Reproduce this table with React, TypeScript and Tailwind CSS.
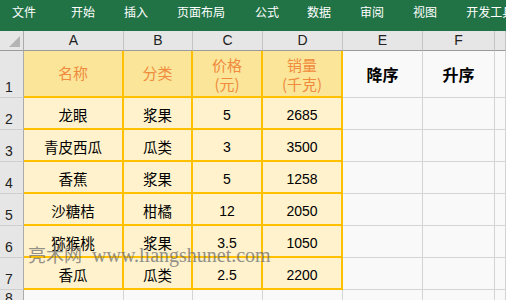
import React from "react";

const cjk = '"Noto Sans CJK SC", "Noto Sans", sans-serif';
const latin = '"Liberation Sans", "Noto Sans CJK SC", sans-serif';

const rows: [string, string, string, string][] = [
  ["龙眼", "浆果", "5", "2685"],
  ["青皮西瓜", "瓜类", "3", "3500"],
  ["香蕉", "浆果", "5", "1258"],
  ["沙糖桔", "柑橘", "12", "2050"],
  ["猕猴桃", "浆果", "3.5", "1050"],
  ["香瓜", "瓜类", "2.5", "2200"],
];

const menu = [
  { t: "文件", ml: "ml-[12px]" },
  { t: "开始", ml: "ml-[35px]" },
  { t: "插入", ml: "ml-[29px]" },
  { t: "页面布局", ml: "ml-[29px]" },
  { t: "公式", ml: "ml-[30px]" },
  { t: "数据", ml: "ml-[28px]" },
  { t: "审阅", ml: "ml-[29px]" },
  { t: "视图", ml: "ml-[29px]" },
  { t: "开发工具", ml: "ml-[29px]" },
];

const letters = ["A", "B", "C", "D", "E", "F", ""];

export default function App() {
  const rowHead =
    "bg-[#e6e6e6] border-r border-r-[#ababab] border-b border-b-[#cfcfcf] flex items-end pl-[5px] pb-[2px] text-[14px] leading-[16px] text-[#222]";
  const yellow =
    "bg-[#fff2cc] border-r-2 border-b-2 border-[#ffc000] flex items-center justify-center pt-[4px] text-[14.5px] leading-[18px] text-black";
  const gray = "bg-[#f9f9f9] border-r border-b border-[#d4d4d4]";
  return (
    <div className="relative w-[506px] h-[300px] overflow-hidden bg-[#f9f9f9]" style={{ fontFamily: cjk }}>
      {/* ribbon */}
      <div className="h-[31px] bg-[#217346] flex items-start pt-[4px] whitespace-nowrap">
        {menu.map((m) => (
          <span key={m.t} className={`${m.ml} text-white text-[12px] leading-[16px] shrink-0`}>
            {m.t}
          </span>
        ))}
      </div>
      {/* grid */}
      <div className="grid grid-cols-[24px_100px_69px_70px_80px_80px_72px_1fr] grid-rows-[20px_47px_32px_32px_32px_32px_32px_32px_1fr] h-[269px]">
        {/* header row */}
        <div className="bg-[#e6e6e6] border-r border-r-[#ababab] border-b border-b-[#9b9b9b] relative">
          <div className="absolute right-[3px] bottom-[3px] w-0 h-0 border-l-[11px] border-l-transparent border-b-[11px] border-b-[#b4b4b4]" />
        </div>
        {letters.map((l, i) => (
          <div
            key={i}
            className="bg-[#e6e6e6] border-r border-r-[#c4c4c4] border-b border-b-[#9b9b9b] flex items-center justify-center text-[14px] text-[#222]"
            style={{ fontFamily: latin }}
          >
            {l}
          </div>
        ))}

        {/* row 1 */}
        <div className={rowHead} style={{ fontFamily: latin }}>1</div>
        {["名称", "分类"].map((h) => (
          <div key={h} className="bg-[#fae599] border-r-2 border-b-2 border-[#ffc000] flex items-center justify-center text-[15px] text-[#f08a3c]">
            {h}
          </div>
        ))}
        <div className="bg-[#fae599] border-r-2 border-b-2 border-[#ffc000] flex flex-col items-center justify-center text-[15px] leading-[19px] text-[#f08a3c]">
          <span>价格</span>
          <span>(元)</span>
        </div>
        <div className="bg-[#fae599] border-r-2 border-b-2 border-[#ffc000] flex flex-col items-center justify-center text-[15px] leading-[19px] text-[#f08a3c]">
          <span>销量</span>
          <span>(千克)</span>
        </div>
        <div className={`${gray} flex items-center justify-center text-[16px] font-bold text-black`}>降序</div>
        <div className={`${gray} flex items-center justify-center text-[16px] font-bold text-black`}>升序</div>
        <div className={gray} />

        {/* data rows */}
        {rows.map((r, i) => (
          <React.Fragment key={i}>
            <div className={rowHead} style={{ fontFamily: latin }}>{i + 2}</div>
            <div className={yellow}>{r[0]}</div>
            <div className={yellow}>{r[1]}</div>
            <div className={`${yellow} text-[14px]`} style={{ fontFamily: latin }}>{r[2]}</div>
            <div className={`${yellow} text-[14px]`} style={{ fontFamily: latin }}>{r[3]}</div>
            <div className={gray} />
            <div className={gray} />
            <div className={gray} />
          </React.Fragment>
        ))}

        {/* row 8 */}
        <div className={rowHead} style={{ fontFamily: latin }}>8</div>
        {[0, 1, 2, 3, 4, 5, 6].map((k) => (
          <div key={k} className={gray} />
        ))}
      </div>

      {/* watermark */}
      <div className="absolute left-[28px] top-[243px] whitespace-nowrap text-[#707070] opacity-75 pointer-events-none flex items-baseline">
        <span className="text-[18px] leading-[22px]" style={{ fontFamily: '"Noto Sans CJK SC", serif' }}>亮术网</span>
        <span className="ml-[10px] text-[20px] leading-[22px]" style={{ fontFamily: '"Liberation Serif", serif' }}>www.liangshunet.com</span>
      </div>
    </div>
  );
}
